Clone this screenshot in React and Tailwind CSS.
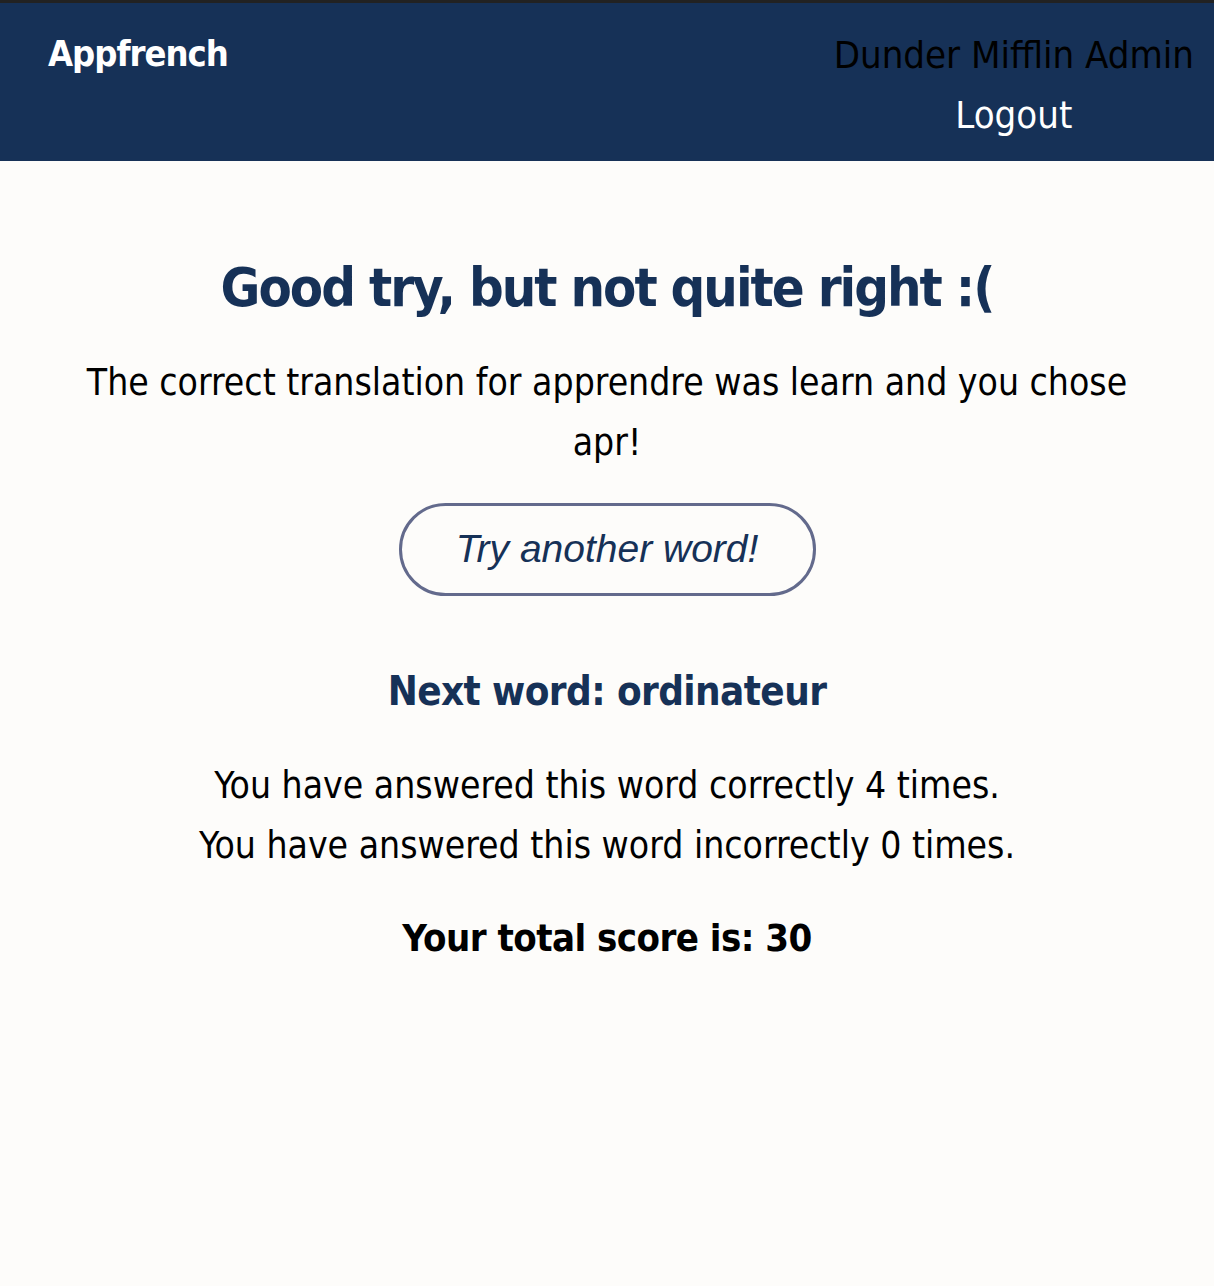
const font = "font-['Liberation_Sans_Narrow','DejaVu_Sans_Condensed',Roboto,sans-serif]";

const App = () => {
  return (
    <div className={`min-h-screen bg-[#fdfcfa] border-t-[3px] border-[#222222] ${font}`}>
      <nav className="h-[158px] bg-[#163157] flex justify-between items-start">
        <div className="pl-[48px] pt-[26px] text-[36px] leading-[50px] font-bold tracking-[-1px] text-white">Appfrench</div>
        <div className="pr-[20px] pt-[22px] text-center text-[38px] leading-[60px]">
          <div className="text-black">Dunder Mifflin Admin</div>
          <a href="#" className="text-white">Logout</a>
        </div>
      </nav>

      <main className="flex flex-col items-center text-center">
        <h1 className="mt-[87px] text-[54px] leading-[80px] font-bold tracking-[-2px] text-[#163157]">
          Good try, but not quite right :(
        </h1>
        <p className="mt-[25px] w-[1080px] text-[37px] leading-[60px] text-black">
          The correct translation for apprendre was learn and you chose apr!
        </p>
        <button className="mt-[30px] w-[417px] h-[93px] rounded-full border-[3px] border-[#636a8c] bg-transparent font-['Liberation_Sans',Arial,sans-serif] italic text-[39px] text-[#163157]">
          Try another word!
        </button>
        <h2 className="mt-[65px] text-[40px] leading-[60px] font-bold tracking-[-0.6px] text-[#163157]">
          Next word: ordinateur
        </h2>
        <div className="mt-[35px] text-[37px] leading-[60px] text-black">
          <p>You have answered this word correctly 4 times.</p>
          <p>You have answered this word incorrectly 0 times.</p>
        </div>
        <p className="mt-[32px] text-[38px] leading-[60px] font-bold tracking-[-0.55px] text-black">Your total score is: 30</p>
      </main>
    </div>
  );
};

export default App;
